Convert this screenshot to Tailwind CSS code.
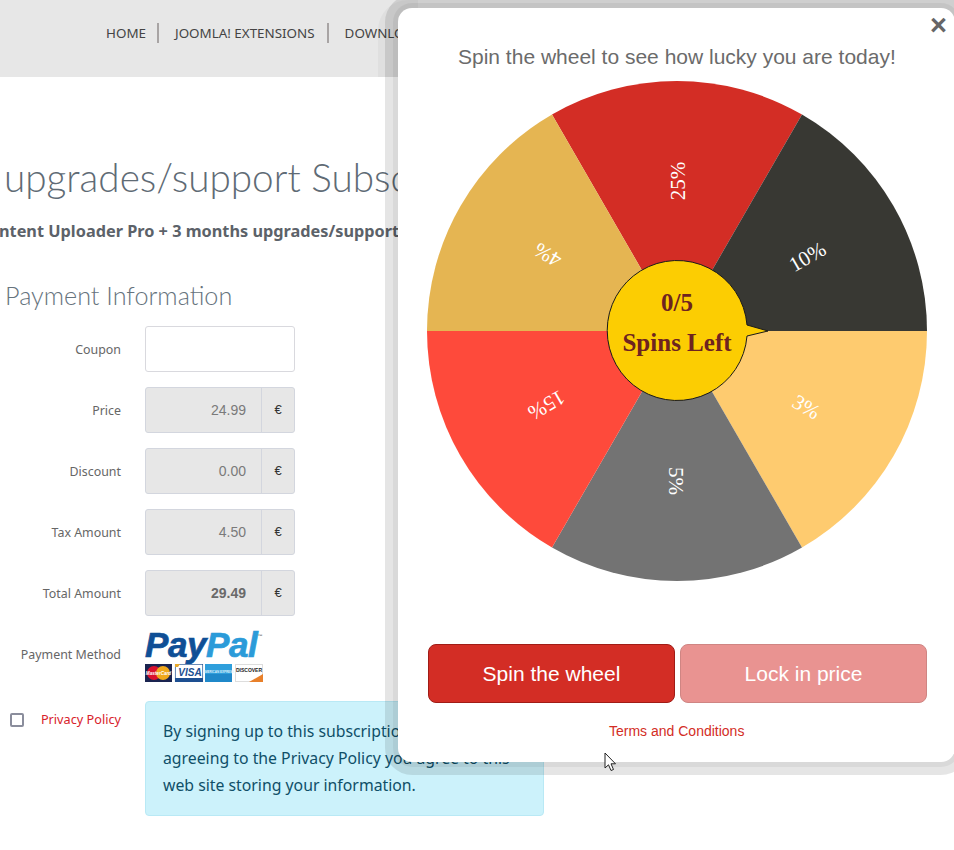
<!DOCTYPE html>
<html>
<head>
<meta charset="utf-8">
<script src="https://cdn.jsdelivr.net/npm/@tailwindcss/browser@4"></script>
</head>
<body class="bg-white">
<div class="relative w-[954px] h-[850px] overflow-hidden bg-white font-['Noto_Sans',sans-serif] text-[#5c5c5c]">
  <header class="h-[77px] bg-[#e7e7e7] flex items-center pb-[11px] pl-[106px] text-[13.4px] text-[#444] whitespace-nowrap">
    <span class="pr-[11px] border-r-2 border-[#a8a4a4] leading-[20px]">HOME</span>
    <span class="pl-[16px] pr-[12px] border-r-2 border-[#a8a4a4] leading-[20px]">JOOMLA! EXTENSIONS</span>
    <span class="pl-[16px] leading-[20px]">DOWNLOADS</span>
  </header>
  <main class="flex flex-col">
    <h1 class="mt-[75px] ml-[4px] whitespace-nowrap text-[38.7px] leading-[50px] font-['Lato','Noto_Sans',sans-serif] font-[300] text-[#5f6b75]">upgrades/support Subscription</h1>
    <p class="-ml-[1px] mt-[17px] whitespace-nowrap text-[16.3px] leading-[24px] font-bold text-[#5c6269]">ntent Uploader Pro + 3 months upgrades/support</p>
    <h2 class="mt-[36px] ml-[5px] text-[25.2px] leading-[32px] font-['Lato','Noto_Sans',sans-serif] font-[300] text-[#66737d]">Payment Information</h2>
    <form class="mt-[15px] flex flex-col gap-[15px] w-[295px]">
      <div class="flex items-center gap-[24px]"><label class="w-[121px] pt-[2px] text-right text-[12.4px] text-[#666]">Coupon</label><div class="w-[150px] h-[46px] bg-white border border-[#d9d9de] rounded-[3px]"></div></div>
      <div class="flex items-center gap-[24px]"><label class="w-[121px] pt-[2px] text-right text-[12.4px] text-[#666]">Price</label><div class="w-[150px] h-[46px] flex bg-[#e7e7e7] border border-[#d3d6de] rounded-[3px]"><div class="flex-1 flex items-center justify-end pr-[15px] font-['Liberation_Sans',sans-serif] text-[14px] text-[#7a7a7a]">24.99</div><div class="w-[33px] border-l border-[#d3d6de] flex items-center justify-center font-['Liberation_Sans',sans-serif] text-[13px] text-[#333]">€</div></div></div>
      <div class="flex items-center gap-[24px]"><label class="w-[121px] pt-[2px] text-right text-[12.4px] text-[#666]">Discount</label><div class="w-[150px] h-[46px] flex bg-[#e7e7e7] border border-[#d3d6de] rounded-[3px]"><div class="flex-1 flex items-center justify-end pr-[15px] font-['Liberation_Sans',sans-serif] text-[14px] text-[#7a7a7a]">0.00</div><div class="w-[33px] border-l border-[#d3d6de] flex items-center justify-center font-['Liberation_Sans',sans-serif] text-[13px] text-[#333]">€</div></div></div>
      <div class="flex items-center gap-[24px]"><label class="w-[121px] pt-[2px] text-right text-[12.4px] text-[#666]">Tax Amount</label><div class="w-[150px] h-[46px] flex bg-[#e7e7e7] border border-[#d3d6de] rounded-[3px]"><div class="flex-1 flex items-center justify-end pr-[15px] font-['Liberation_Sans',sans-serif] text-[14px] text-[#7a7a7a]">4.50</div><div class="w-[33px] border-l border-[#d3d6de] flex items-center justify-center font-['Liberation_Sans',sans-serif] text-[13px] text-[#333]">€</div></div></div>
      <div class="flex items-center gap-[24px]"><label class="w-[121px] pt-[2px] text-right text-[12.4px] text-[#666]">Total Amount</label><div class="w-[150px] h-[46px] flex bg-[#e7e7e7] border border-[#d3d6de] rounded-[3px]"><div class="flex-1 flex items-center justify-end pr-[15px] font-['Liberation_Sans',sans-serif] text-[14px] font-bold text-[#6a6a6a]">29.49</div><div class="w-[33px] border-l border-[#d3d6de] flex items-center justify-center font-['Liberation_Sans',sans-serif] text-[13px] text-[#333]">€</div></div></div>
      <div class="flex items-center gap-[24px] h-[52px]">
        <label class="w-[121px] text-right text-[12.4px] text-[#666] whitespace-nowrap pb-[3px]">Payment Method</label>
        <div class="w-[120px] flex flex-col -mt-[2px]">
          <div class="flex h-[33px] items-start font-['Liberation_Sans',sans-serif] font-bold italic text-[35px] leading-[27px] tracking-[-0.4px] [-webkit-text-stroke:0.7px]"><span class="text-[#0f4f96]">Pay</span><span class="text-[#2b9bd9]">Pal</span><span class="text-[5px] leading-[8px] not-italic text-[#777] [-webkit-text-stroke:0px] mt-[1px]">™</span></div>
          <svg width="119" height="18" viewBox="0 0 119 18" class="block">
            <rect x="0" y="0" width="27" height="18" fill="#1a2450"/><circle cx="9" cy="9" r="7" fill="#d9112d"/><circle cx="18" cy="9" r="7" fill="#f0a81c"/>
            <text x="13.5" y="11" text-anchor="middle" font-family="Liberation Sans" font-size="4.6" font-weight="700" font-style="italic" fill="#fff">MasterCard</text>
            <rect x="30" y="0" width="28" height="18" fill="#fff"/><rect x="30.3" y="0.3" width="27.4" height="17.4" fill="none" stroke="#1d4f91" stroke-width="0.7"/><rect x="30" y="14" width="28" height="4" fill="#1d4f91"/><path d="M30 0H35L33 3H30Z" fill="#e8a92c"/><text x="45" y="12" text-anchor="middle" font-family="Liberation Sans" font-size="10" font-weight="700" font-style="italic" fill="#1d4f91">VISA</text>
            <rect x="60" y="0" width="27" height="18" fill="#2f9fdc"/><rect x="60" y="10" width="27" height="8" fill="#1f88c9"/><text x="73.5" y="9" text-anchor="middle" font-family="Liberation Sans" font-size="3" font-weight="700" fill="#dff1fb">AMERICAN EXPRESS</text>
            <rect x="90.5" y="0.5" width="27" height="17" fill="#fff" stroke="#ddd"/><path d="M104 18L118 10V18Z" fill="#e8802a"/><text x="104" y="8" text-anchor="middle" font-family="Liberation Sans" font-size="5" font-weight="700" fill="#222">DISCOVER</text>
          </svg>
        </div>
      </div>
    </form>
    <div class="mt-[18px] flex items-start">
      <div class="w-[145px] flex items-center pl-[10px] pr-[24px] h-[38px]">
        <span class="w-[14px] h-[14px] border-2 border-[#8a8d9c] rounded-[2px] shrink-0"></span>
        <span class="ml-auto text-[12.7px] text-[#d8222b] whitespace-nowrap">Privacy Policy</span>
      </div>
      <div class="w-[399px] h-[115px] bg-[#ccf2fb] border border-[#b9e9f5] rounded-[4px] px-[17px] pt-[16px] text-[15.8px] leading-[27px] text-[#0f4f68]">By signing up to this subscription you are agreeing to the Privacy Policy you agree to this web site storing your information.</div>
    </div>
  </main>

  <div class="absolute left-[378px] top-0 w-[40px] h-[77px] rounded-tl-[30px] bg-black/3"></div>
  <div class="absolute left-[398px] top-[8px] w-[557px] h-[754px] bg-white rounded-[14px] shadow-[0_0_0_5px_rgba(0,0,0,0.05),0_0_0_13px_rgba(0,0,0,0.1)] font-['Liberation_Sans',sans-serif]">
    <span class="absolute left-[532px] top-[2px] text-[29px] leading-[30px] font-bold text-[#666]">×</span>
    <p class="pl-[60px] pt-[36px] text-[21px] leading-[26px] text-[#6b6b6b] whitespace-nowrap">Spin the wheel to see how lucky you are today!</p>
    <svg class="absolute left-[29px] top-[73px]" width="500" height="500" viewBox="-250 -250 500 500">
      <path d="M0 0L-125 -216.5A250 250 0 0 1 125 -216.5Z" fill="#d32d25"/>
      <path d="M0 0L125 -216.5A250 250 0 0 1 250 0Z" fill="#383833"/>
      <path d="M0 0L250 0A250 250 0 0 1 125 216.5Z" fill="#fecb6f"/>
      <path d="M0 0L125 216.5A250 250 0 0 1 -125 216.5Z" fill="#737373"/>
      <path d="M0 0L-125 216.5A250 250 0 0 1 -250 0Z" fill="#fe4a3b"/>
      <path d="M0 0L-250 0A250 250 0 0 1 -125 -216.5Z" fill="#e5b552"/>
      <g font-family="Liberation Serif" font-size="21" fill="#fff" text-anchor="middle">
        <text transform="rotate(-90) translate(150 8)">25%</text>
        <text transform="rotate(-30) translate(150 8)">10%</text>
        <text transform="rotate(30) translate(150 8)">3%</text>
        <text transform="rotate(90) translate(150 8)">5%</text>
        <text transform="rotate(150) translate(150 8)">15%</text>
        <text transform="rotate(210) translate(150 8)">4%</text>
      </g>
      <path d="M70 -6L91 0L70 5A70 70 0 1 1 70 -6Z" fill="#fccd02" stroke="#1a1a1a" stroke-width="1"/>
      <g font-family="Liberation Serif" font-weight="700" fill="#6e2320" text-anchor="middle">
        <text y="-20" font-size="25">0/5</text>
        <text y="20" font-size="25">Spins Left</text>
      </g>
    </svg>
    <div class="absolute left-[30px] top-[636px] flex gap-[5px]">
      <div class="w-[247px] h-[59px] flex items-center justify-center rounded-[8px] bg-[#d32d25] border border-[#a01c16] text-white text-[21px]">Spin the wheel</div>
      <div class="w-[247px] h-[59px] flex items-center justify-center rounded-[8px] bg-[#e99391] border border-[#cf8583] text-white text-[21px]">Lock in price</div>
    </div>
    <p class="absolute left-[211px] top-[714px] text-[14px] leading-[18px] text-[#d32d25] whitespace-nowrap">Terms and Conditions</p>
  </div>

  <svg class="absolute left-[604px] top-[752px]" width="14" height="20" viewBox="0 0 14 20"><path d="M1 1V16L4.5 12.8L7 18.5L9.5 17.5L7 11.8H11.5Z" fill="#fff" stroke="#222" stroke-width="1"/></svg>
</div>
</body>
</html>
